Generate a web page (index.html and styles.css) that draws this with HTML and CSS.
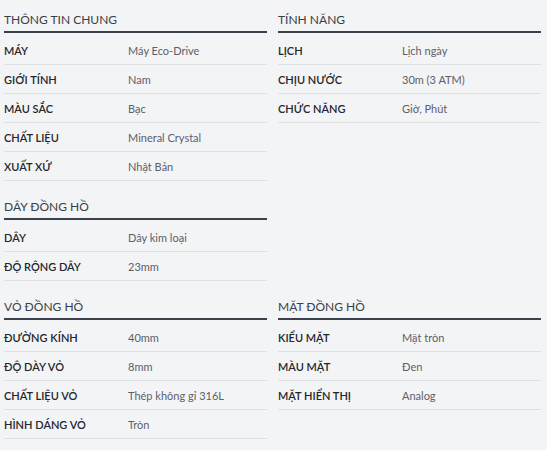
FILE: index.html
```html
<!DOCTYPE html>
<html lang="vi">
<head>
<meta charset="utf-8">
<title>Thông số</title>
<link rel="stylesheet" href="styles.css">
</head>
<body>
<div class="specs">
  <section class="spec">
    <h3 class="spec-title">Thông tin chung</h3>
    <ul class="spec-list">
      <li class="spec-row"><span class="spec-label">Máy</span><span class="spec-value">Máy Eco-Drive</span></li>
      <li class="spec-row"><span class="spec-label">Giới tính</span><span class="spec-value">Nam</span></li>
      <li class="spec-row"><span class="spec-label">Màu sắc</span><span class="spec-value">Bạc</span></li>
      <li class="spec-row"><span class="spec-label">Chất liệu</span><span class="spec-value">Mineral Crystal</span></li>
      <li class="spec-row"><span class="spec-label">Xuất xứ</span><span class="spec-value">Nhật Bản</span></li>
    </ul>
  </section>
  <section class="spec">
    <h3 class="spec-title">Tính năng</h3>
    <ul class="spec-list">
      <li class="spec-row"><span class="spec-label">Lịch</span><span class="spec-value">Lịch ngày</span></li>
      <li class="spec-row"><span class="spec-label">Chịu nước</span><span class="spec-value">30m (3 ATM)</span></li>
      <li class="spec-row"><span class="spec-label">Chức năng</span><span class="spec-value">Giờ, Phút</span></li>
    </ul>
  </section>
  <section class="spec">
    <h3 class="spec-title">Dây đồng hồ</h3>
    <ul class="spec-list">
      <li class="spec-row"><span class="spec-label">Dây</span><span class="spec-value">Dây kim loại</span></li>
      <li class="spec-row"><span class="spec-label">Độ rộng dây</span><span class="spec-value">23mm</span></li>
    </ul>
  </section>
  <div class="spec-empty"></div>
  <section class="spec">
    <h3 class="spec-title">Vỏ đồng hồ</h3>
    <ul class="spec-list">
      <li class="spec-row"><span class="spec-label">Đường kính</span><span class="spec-value">40mm</span></li>
      <li class="spec-row"><span class="spec-label">Độ dày vỏ</span><span class="spec-value">8mm</span></li>
      <li class="spec-row"><span class="spec-label">Chất liệu vỏ</span><span class="spec-value">Thép không gỉ 316L</span></li>
      <li class="spec-row"><span class="spec-label">Hình dáng vỏ</span><span class="spec-value">Tròn</span></li>
    </ul>
  </section>
  <section class="spec">
    <h3 class="spec-title">Mặt đồng hồ</h3>
    <ul class="spec-list">
      <li class="spec-row"><span class="spec-label">Kiểu mặt</span><span class="spec-value">Mặt tròn</span></li>
      <li class="spec-row"><span class="spec-label">Màu mặt</span><span class="spec-value">Đen</span></li>
      <li class="spec-row"><span class="spec-label">Mặt hiển thị</span><span class="spec-value">Analog</span></li>
    </ul>
  </section>
</div>
</body>
</html>
```

FILE: styles.css
```css
* { box-sizing: border-box; }

html, body {
  margin: 0;
  padding: 0;
  background: #f3f4f6;
  font-family: Lato, "Noto Sans", "Liberation Sans", sans-serif;
}

.specs {
  display: grid;
  grid-template-columns: 263px 263px;
  column-gap: 11px;
  row-gap: 6px;
  align-items: start;
  padding: 0 4px;
}

.spec-title {
  margin: 0;
  padding: 10px 0 1px;
  line-height: 20px;
  font-size: 12px;
  font-weight: 400;
  text-transform: uppercase;
  color: #3a3e46;
  border-bottom: 2px solid #3a404c;
}

.spec-list {
  list-style: none;
  margin: 3px 0 0;
  padding: 0;
}

.spec-row {
  display: flex;
  align-items: center;
  height: 29px;
  border-bottom: 1px solid #dfe0e3;
}

.spec-label {
  flex: 0 0 124px;
  font-size: 11px;
  font-weight: 600;
  text-transform: uppercase;
  color: #23262b;
}

.spec-value {
  font-size: 11px;
  color: #5d6068;
}
```
